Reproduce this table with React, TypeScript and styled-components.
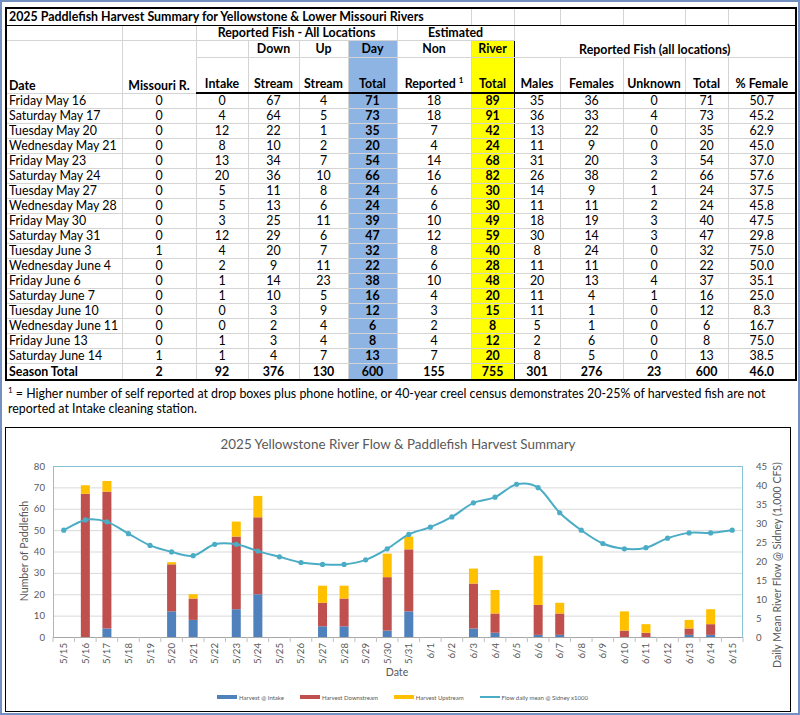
import React from 'react';
import styled, { createGlobalStyle, css } from 'styled-components';

const GlobalStyle = createGlobalStyle`
  html, body { margin: 0; padding: 0; background: #fff; }
  body { font-family: Lato, "Liberation Sans", sans-serif; }
`;

const FONT = 'Lato, "Liberation Sans", sans-serif';

const Page = styled.div`
  width: 800px;
  height: 715px;
  box-sizing: border-box;
  border: 2px solid #7391c0;
  padding: 5px 3px 0 3px;
  display: flex;
  flex-direction: column;
  font-family: ${FONT};
  color: #000;
  overflow: hidden;
`;

const Table = styled.table`
  width: 790px;
  border-collapse: collapse;
  table-layout: fixed;
  border: 2px solid #000;
  font-size: 12.4px;
`;

const Cell = styled.td<{
  $align?: 'left' | 'center';
  $bold?: boolean;
  $bg?: string;
  $valign?: 'top' | 'middle' | 'bottom';
  $darkLeft?: boolean;
  $darkRight?: boolean;
  $darkBottom?: boolean;
  $noTop?: boolean;
  $noBottom?: boolean;
}>`
  padding: 0 2px;
  line-height: 14px;
  border: 1px solid #d4d4d4;
  white-space: nowrap;
  overflow: visible;
  text-align: ${(p) => p.$align || 'center'};
  vertical-align: ${(p) => p.$valign || 'middle'};
  font-weight: ${(p) => (p.$bold ? 700 : 400)};
  background: ${(p) => p.$bg || 'transparent'};
  ${(p) => p.$darkLeft && css`border-left: 1px solid #000;`}
  ${(p) => p.$darkRight && css`border-right: 1px solid #000;`}
  ${(p) => p.$darkBottom && css`border-bottom: 1px solid #000;`}
  ${(p) => p.$noTop && css`border-top: none;`}
  ${(p) => p.$noBottom && css`border-bottom: none;`}
`;

const HeadRow = styled.tr<{ $h: number; $thick?: boolean }>`
  height: ${(p) => p.$h}px;
  ${(p) =>
    p.$thick &&
    css`
      td {
        border-bottom: 2px solid #000;
        padding-bottom: 1px;
      }
    `}
`;

const BLUE = '#8eb4e3';
const YELLOW = '#ffff00';

const DataRow = styled.tr<{ $total?: boolean }>`
  height: 15px;
  td:nth-child(1) {
    text-align: left;
    padding-left: 2px;
  }
  td:nth-child(2),
  td:nth-child(3) {
    border-left: 1px solid #000;
  }
  td:nth-child(6) {
    background: ${BLUE};
    font-weight: 700;
  }
  td:nth-child(8) {
    background: ${YELLOW};
    font-weight: 700;
    border-left: 1px solid #000;
    border-right: 1px solid #000;
  }
  ${(p) =>
    p.$total &&
    css`
      td {
        font-weight: 700;
        border-top: 1px solid #000;
        line-height: 15px;
      }
    `}
`;

const Sup = styled.sup`
  font-size: 8px;
  line-height: 0;
  vertical-align: 5px;
`;

const Footnote = styled.div`
  font-size: 12.4px;
  line-height: 15px;
  padding: 5px 3px 0;
`;

const ChartBox = styled.div`
  margin-top: 11px;
  width: 786px;
  height: 285px;
  box-sizing: border-box;
  border: 1px solid #000;
  display: flex;
  flex-direction: column;
  font-family: ${FONT};
`;

const ChartTitle = styled.div`
  height: 29px;
  box-sizing: border-box;
  padding-top: 8px;
  text-align: center;
  font-size: 13.4px;
  line-height: 17px;
  color: #595959;
`;

const Legend = styled.div`
  flex: 1;
  display: flex;
  align-items: center;
  justify-content: center;
  padding-left: 9px;
  gap: 16px;
  font-size: 6px;
  color: #595959;
`;

const LegendItem = styled.div`
  display: flex;
  align-items: center;
  gap: 2px;
`;

const Swatch = styled.span<{ $color: string; $line?: boolean }>`
  display: inline-block;
  width: 20px;
  height: ${(p) => (p.$line ? 2 : 4)}px;
  background: ${(p) => p.$color};
`;

type Row = [string, number, number, number, number, number, number, number, number, number, number, number, string];

const rows: Row[] = [
  ['Friday May 16', 0, 0, 67, 4, 71, 18, 89, 35, 36, 0, 71, '50.7'],
  ['Saturday May 17', 0, 4, 64, 5, 73, 18, 91, 36, 33, 4, 73, '45.2'],
  ['Tuesday May 20', 0, 12, 22, 1, 35, 7, 42, 13, 22, 0, 35, '62.9'],
  ['Wednesday May 21', 0, 8, 10, 2, 20, 4, 24, 11, 9, 0, 20, '45.0'],
  ['Friday May 23', 0, 13, 34, 7, 54, 14, 68, 31, 20, 3, 54, '37.0'],
  ['Saturday May 24', 0, 20, 36, 10, 66, 16, 82, 26, 38, 2, 66, '57.6'],
  ['Tuesday May 27', 0, 5, 11, 8, 24, 6, 30, 14, 9, 1, 24, '37.5'],
  ['Wednesday May 28', 0, 5, 13, 6, 24, 6, 30, 11, 11, 2, 24, '45.8'],
  ['Friday May 30', 0, 3, 25, 11, 39, 10, 49, 18, 19, 3, 40, '47.5'],
  ['Saturday May 31', 0, 12, 29, 6, 47, 12, 59, 30, 14, 3, 47, '29.8'],
  ['Tuesday June 3', 1, 4, 20, 7, 32, 8, 40, 8, 24, 0, 32, '75.0'],
  ['Wednesday June 4', 0, 2, 9, 11, 22, 6, 28, 11, 11, 0, 22, '50.0'],
  ['Friday June 6', 0, 1, 14, 23, 38, 10, 48, 20, 13, 4, 37, '35.1'],
  ['Saturday June 7', 0, 1, 10, 5, 16, 4, 20, 11, 4, 1, 16, '25.0'],
  ['Tuesday June 10', 0, 0, 3, 9, 12, 3, 15, 11, 1, 0, 12, '8.3'],
  ['Wednesday June 11', 0, 0, 2, 4, 6, 2, 8, 5, 1, 0, 6, '16.7'],
  ['Friday June 13', 0, 1, 3, 4, 8, 4, 12, 2, 6, 0, 8, '75.0'],
  ['Saturday June 14', 1, 1, 4, 7, 13, 7, 20, 8, 5, 0, 13, '38.5'],
];
const totalRow: Row = ['Season Total', 2, 92, 376, 130, 600, 155, 755, 301, 276, 23, 600, '46.0'];

const colWidths = [116, 74, 52, 51, 49, 49, 74, 43, 46, 63, 62, 43, 68];

// ---------- chart ----------
const W = 784;
const H = 226;
const PL = 47;
const PR = 737;
const PT = 9;
const PB = 180;
const N = 32;
const CW = (PR - PL) / N;
const cx = (i: number) => PL + (i + 0.5) * CW;
const yL = (v: number) => PB - (v * (PB - PT)) / 80;
const yR = (v: number) => PB - (v * (PB - PT)) / 45;

const dateLabels: string[] = [];
for (let d = 15; d <= 31; d++) dateLabels.push(`5/${d}`);
for (let d = 1; d <= 15; d++) dateLabels.push(`6/${d}`);

const bars: Record<number, [number, number, number]> = {
  1: [0, 67, 4],
  2: [4, 64, 5],
  5: [12, 22, 1],
  6: [8, 10, 2],
  8: [13, 34, 7],
  9: [20, 36, 10],
  12: [5, 11, 8],
  13: [5, 13, 6],
  15: [3, 25, 11],
  16: [12, 29, 6],
  19: [4, 21, 7],
  20: [2, 9, 11],
  22: [1, 14, 23],
  23: [1, 10, 5],
  26: [0, 3, 9],
  27: [0, 2, 4],
  29: [1, 3, 4],
  30: [1, 5, 7],
};

const flow = [
  28.1, 30.8, 30.3, 27.2, 24.1, 22.4, 21.4, 24.4, 24.4, 22.6, 21.1, 19.6, 19.1, 19.1, 20.3, 23.2, 27.0, 28.9,
  31.6, 35.3, 36.8, 40.2, 39.3, 32.7, 28.1, 24.6, 23.2, 23.5, 26.0, 27.4, 27.4, 28.1,
];

const C_INTAKE = '#4f81bd';
const C_DOWN = '#c0504d';
const C_UP = '#ffc000';
const C_FLOW = '#4bacc6';
const AX = '#595959';

function smoothPath(pts: [number, number][]) {
  let d = `M${pts[0][0].toFixed(2)},${pts[0][1].toFixed(2)}`;
  for (let i = 0; i < pts.length - 1; i++) {
    const p0 = pts[i - 1] || pts[i];
    const p1 = pts[i];
    const p2 = pts[i + 1];
    const p3 = pts[i + 2] || p2;
    const c1x = p1[0] + (p2[0] - p0[0]) / 6;
    const c1y = p1[1] + (p2[1] - p0[1]) / 6;
    const c2x = p2[0] - (p3[0] - p1[0]) / 6;
    const c2y = p2[1] - (p3[1] - p1[1]) / 6;
    d += ` C${c1x.toFixed(2)},${c1y.toFixed(2)} ${c2x.toFixed(2)},${c2y.toFixed(2)} ${p2[0].toFixed(2)},${p2[1].toFixed(2)}`;
  }
  return d;
}

const ChartSvg = styled.svg`
  display: block;
  font-family: ${FONT};
`;

const Chart: React.FC = () => {
  const flowPts: [number, number][] = flow.map((v, i) => [cx(i), yR(v)]);
  const barW = 9;
  return (
    <ChartSvg width={W} height={H} viewBox={`0 0 ${W} ${H}`}>
      {/* gridlines */}
      {[10, 20, 30, 40, 50, 60, 70].map((v) => (
        <line key={v} x1={PL} x2={PR} y1={yL(v) + 0.5} y2={yL(v) + 0.5} stroke="#d9d9d9" strokeWidth={1} />
      ))}
      {/* bars */}
      {Object.entries(bars).map(([k, [a, b, c]]) => {
        const x = cx(Number(k)) - barW / 2;
        return (
          <g key={k}>
            {a > 0 && <rect x={x} y={yL(a)} width={barW} height={yL(0) - yL(a)} fill={C_INTAKE} />}
            <rect x={x} y={yL(a + b)} width={barW} height={yL(a) - yL(a + b)} fill={C_DOWN} />
            <rect x={x} y={yL(a + b + c)} width={barW} height={yL(a + b) - yL(a + b + c)} fill={C_UP} />
          </g>
        );
      })}
      {/* plot border */}
      <rect x={PL + 0.5} y={PT + 0.5} width={PR - PL - 1} height={PB - PT} fill="none" stroke="#86c5d8" strokeWidth={1} />
      <line x1={PL} x2={PR} y1={PB + 0.5} y2={PB + 0.5} stroke="#a6a6a6" strokeWidth={1} />
      {/* ticks */}
      {Array.from({ length: N + 1 }, (_, k) => (
        <line
          key={k}
          x1={PL + k * CW}
          x2={PL + k * CW}
          y1={PB}
          y2={PB + 5}
          stroke="#bfbfbf"
          strokeWidth={1}
        />
      ))}
      {/* flow */}
      <path d={smoothPath(flowPts)} fill="none" stroke={C_FLOW} strokeWidth={2} />
      {flowPts.map(([x, y], i) => (
        <circle key={i} cx={x} cy={y} r={2.6} fill={C_FLOW} />
      ))}
      {/* left axis labels */}
      {[0, 10, 20, 30, 40, 50, 60, 70, 80].map((v) => (
        <text key={v} x={39} y={yL(v) + 3.5} fontSize={9.6} fill={AX} textAnchor="end">
          {v}
        </text>
      ))}
      {/* right axis labels */}
      {[0, 5, 10, 15, 20, 25, 30, 35, 40, 45].map((v) => (
        <text key={v} x={750} y={yR(v) + 3.5} fontSize={9.6} fill={AX} textAnchor="start">
          {v}
        </text>
      ))}
      {/* x labels */}
      {dateLabels.map((l, i) => (
        <text
          key={l}
          transform={`translate(${cx(i) + 3.5},${PB + 6}) rotate(-90)`}
          fontSize={9.6}
          fill={AX}
          textAnchor="end"
        >
          {l}
        </text>
      ))}
      {/* axis titles */}
      <text transform="translate(22,94) rotate(-90)" fontSize={10.6} fill={AX} textAnchor="middle">
        Number of Paddlefish
      </text>
      <text transform="translate(775,108) rotate(-90)" fontSize={10.6} fill={AX} textAnchor="middle">
        Daily Mean River Flow @ Sidney (1,000 CFS)
      </text>
      <text x={391} y={219} fontSize={10.6} fill={AX} textAnchor="middle">
        Date
      </text>
    </ChartSvg>
  );
};

const App: React.FC = () => {
  return (
    <>
      <GlobalStyle />
      <Page>
        <Table>
          <colgroup>
            {colWidths.map((w, i) => (
              <col key={i} style={{ width: w }} />
            ))}
          </colgroup>
          <tbody>
            <HeadRow $h={17}>
              <Cell colSpan={7} $align="left" $bold $darkBottom>
                2025 Paddlefish Harvest Summary for Yellowstone &amp; Lower Missouri Rivers
              </Cell>
              <Cell $darkBottom />
              <Cell $darkBottom />
              <Cell $darkBottom />
              <Cell $darkBottom />
              <Cell $darkBottom />
              <Cell $darkBottom />
            </HeadRow>
            <HeadRow $h={15}>
              <Cell />
              <Cell $darkLeft />
              <Cell colSpan={4} $bold $darkLeft>
                Reported Fish - All Locations
              </Cell>
              <Cell colSpan={2} $bold>
                Estimated
              </Cell>
              <Cell colSpan={5} rowSpan={2} $bold $darkLeft $valign="bottom">
                Reported Fish (all locations)
              </Cell>
            </HeadRow>
            <HeadRow $h={17}>
              <Cell rowSpan={2} $align="left" $bold $valign="bottom" $noBottom>
                Date
              </Cell>
              <Cell rowSpan={2} $bold $valign="bottom" $darkLeft $noBottom>
                Missouri R.
              </Cell>
              <Cell $darkLeft />
              <Cell $bold>Down</Cell>
              <Cell $bold>Up</Cell>
              <Cell $bold $bg={BLUE}>
                Day
              </Cell>
              <Cell $bold>Non</Cell>
              <Cell $bold $bg={YELLOW} $darkLeft $darkRight>
                River
              </Cell>
            </HeadRow>
            <HeadRow $h={36} $thick>
              <Cell $bold $valign="bottom" $darkLeft>
                Intake
              </Cell>
              <Cell $bold $valign="bottom">
                Stream
              </Cell>
              <Cell $bold $valign="bottom">
                Stream
              </Cell>
              <Cell $bold $valign="bottom" $bg={BLUE}>
                Total
              </Cell>
              <Cell $bold $valign="bottom">
                Reported <Sup>1</Sup>
              </Cell>
              <Cell $bold $valign="bottom" $bg={YELLOW} $darkLeft $darkRight>
                Total
              </Cell>
              <Cell $bold $valign="bottom">
                Males
              </Cell>
              <Cell $bold $valign="bottom">
                Females
              </Cell>
              <Cell $bold $valign="bottom">
                Unknown
              </Cell>
              <Cell $bold $valign="bottom">
                Total
              </Cell>
              <Cell $bold $valign="bottom">
                % Female
              </Cell>
            </HeadRow>
            {rows.map((r) => (
              <DataRow key={r[0]}>
                {r.map((v, i) => (
                  <Cell key={i}>{v}</Cell>
                ))}
              </DataRow>
            ))}
            <DataRow $total>
              {totalRow.map((v, i) => (
                <Cell key={i}>{v}</Cell>
              ))}
            </DataRow>
          </tbody>
        </Table>
        <Footnote>
          <Sup>1</Sup> = Higher number of self reported at drop boxes plus phone hotline, or 40-year creel census demonstrates
          20-25% of harvested fish are not
          <br />
          reported at Intake cleaning station.
        </Footnote>
        <ChartBox>
          <ChartTitle>2025 Yellowstone River Flow &amp; Paddlefish Harvest Summary</ChartTitle>
          <Chart />
          <Legend>
            <LegendItem>
              <Swatch $color={C_INTAKE} />
              Harvest @ Intake
            </LegendItem>
            <LegendItem>
              <Swatch $color={C_DOWN} />
              Harvest Downstream
            </LegendItem>
            <LegendItem>
              <Swatch $color={C_UP} />
              Harvest Upstream
            </LegendItem>
            <LegendItem>
              <Swatch $color={C_FLOW} $line />
              Flow daily mean @ Sidney x1000
            </LegendItem>
          </Legend>
        </ChartBox>
      </Page>
    </>
  );
};

export default App;
